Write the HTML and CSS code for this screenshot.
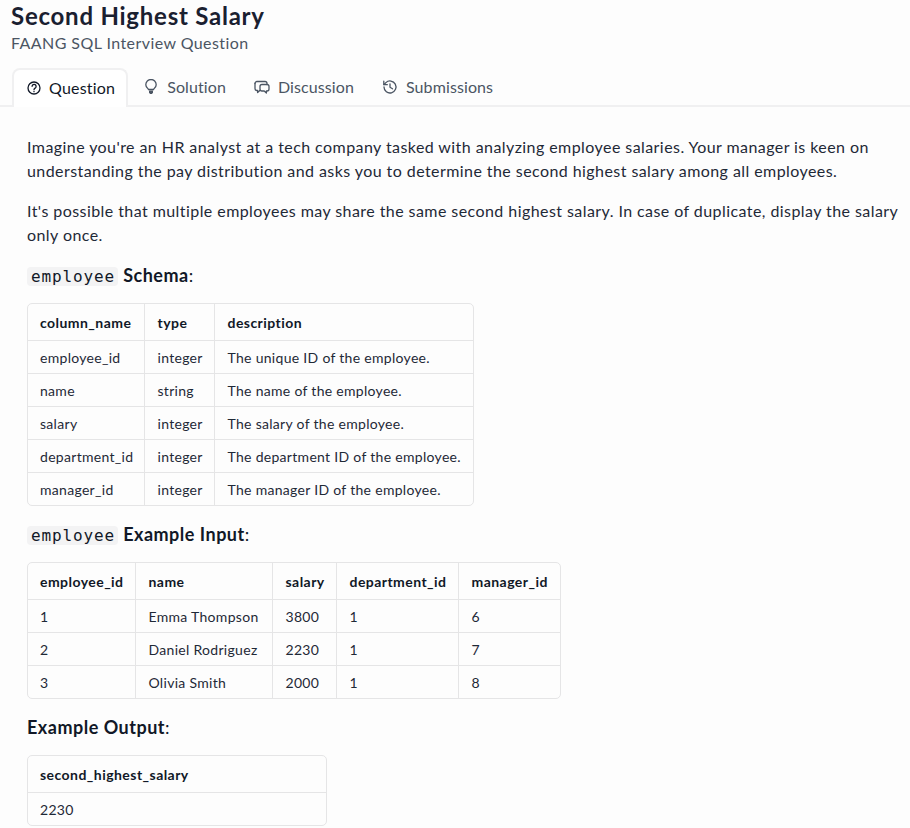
FILE: index.html
```html
<!DOCTYPE html>
<html lang="en">
<head>
<meta charset="utf-8">
<title>Second Highest Salary</title>
<link rel="stylesheet" href="styles.css">
</head>
<body>
<header class="head">
  <h1>Second Highest Salary</h1>
  <p class="sub">FAANG SQL Interview Question</p>
</header>
<nav class="tabs">
  <a class="tab active"><svg viewBox="0 0 16 16"><circle cx="8" cy="8" r="6"/><path d="M6.100 6.300a2 2 0 1 1 3 1.800c-.7.400-1.100.800-1.100 1.600"/><path d="M8 11.400v.3"/></svg>Question</a>
  <a class="tab"><svg viewBox="0 0 16 16"><path d="M5.500 10.500C5.300 9.500 2.800 8.500 2.800 5.700a5.200 5.200 0 0 1 10.400 0c0 2.800-2.500 3.800-2.700 4.800z"/><path class="solid" d="M6 11.500h4v2l-1 1.500H7l-1-1.500z"/></svg>Solution</a>
  <a class="tab"><svg viewBox="0 0 16 16"><path d="M1 4.500a2 2 0 0 1 2-2h8a2 2 0 0 1 2 2v1"/><path d="M1 4.500v5a2 2 0 0 0 2 2h.6v2l2.200-2"/><path d="M6 7.500a2 2 0 0 1 2-2h5a2 2 0 0 1 2 2V10a2 2 0 0 1-2 2h-.6v2l-2.200-2H8a2 2 0 0 1-2-2z"/></svg>Discussion</a>
  <a class="tab"><svg viewBox="0 0 16 16"><path d="M2 8a6 6 0 1 0 1.900-4.400L2 5.500"/><path d="M1.800 2.200v3.500h3.500"/><path d="M8 4.800v3.500l2.500 1.500"/></svg>Submissions</a>
</nav>
<main class="body">
  <p>Imagine you're an HR analyst at a tech company tasked with analyzing employee salaries. Your manager is keen on understanding the pay distribution and asks you to determine the second highest salary among all employees.</p>
  <p class="last">It's possible that multiple employees may share the same second highest salary. In case of duplicate, display the salary only once.</p>
  <h2><code>employee</code> <strong>Schema</strong>:</h2>
  <div class="card schema">
    <table>
      <thead><tr><th>column_name</th><th>type</th><th>description</th></tr></thead>
      <tbody>
        <tr><td>employee_id</td><td>integer</td><td>The unique ID of the employee.</td></tr>
        <tr><td>name</td><td>string</td><td>The name of the employee.</td></tr>
        <tr><td>salary</td><td>integer</td><td>The salary of the employee.</td></tr>
        <tr><td>department_id</td><td>integer</td><td>The department ID of the employee.</td></tr>
        <tr><td>manager_id</td><td>integer</td><td>The manager ID of the employee.</td></tr>
      </tbody>
    </table>
  </div>
  <h2><code>employee</code> <strong>Example Input</strong>:</h2>
  <div class="card sample">
    <table>
      <thead><tr><th>employee_id</th><th>name</th><th>salary</th><th>department_id</th><th>manager_id</th></tr></thead>
      <tbody>
        <tr><td>1</td><td>Emma Thompson</td><td>3800</td><td>1</td><td>6</td></tr>
        <tr><td>2</td><td>Daniel Rodriguez</td><td>2230</td><td>1</td><td>7</td></tr>
        <tr><td>3</td><td>Olivia Smith</td><td>2000</td><td>1</td><td>8</td></tr>
      </tbody>
    </table>
  </div>
  <h2><strong>Example Output</strong>:</h2>
  <div class="card result">
    <table>
      <thead><tr><th>second_highest_salary</th></tr></thead>
      <tbody><tr><td>2230</td></tr></tbody>
    </table>
  </div>
</main>
</body>
</html>
```
FILE: styles.css
```css
* { box-sizing: border-box; }
html, body { margin: 0; padding: 0; }
body {
  height: 828px;
  overflow: hidden;
  background: #fdfdfd;
  color: #111827;
  font-family: "Lato", "Noto Sans", sans-serif;
  font-size: 16px;
  letter-spacing: 0.43px;
}
.head { padding: 0 0 0 11px; }
h1 { margin: 0; font-size: 24px; line-height: 32px; font-weight: 700; color: #1a2030; letter-spacing: 0.76px; }
.sub { margin: -1px 0 0; font-size: 16px; line-height: 24px; color: #4b5563; }
.tabs {
  display: flex;
  margin-top: 13px;
  padding-left: 12px;
  height: 39px;
  border-bottom: 2px solid #f0f0f1;
  letter-spacing: 0.1px;
}
.tab {
  display: flex;
  align-items: center;
  gap: 8px;
  height: 37px;
  padding: 0 14px;
  color: #4b5563;
  white-space: nowrap;
}
.tab svg { width: 16px; height: 16px; fill: none; stroke: currentColor; stroke-width: 1.3; stroke-linecap: round; stroke-linejoin: round; }
.tab svg .solid { fill: currentColor; stroke: none; }
.tab.active {
  height: 39px;
  gap: 7px;
  padding: 0 11px 2px 12px;
  color: #111827;
  background: #fff;
  letter-spacing: 0.2px;
  border: 2px solid #f0f0f1;
  border-bottom: 0;
  border-radius: 8px 8px 0 0;
  margin-right: 1px;
}
.body { padding: 28px 10px 0 27px; }
.body p { margin: 0 0 16px; line-height: 24px; color: #1f2937; }
.body p.last { margin-bottom: 14px; }
h2 { margin: 0 0 14px; font-size: 18px; line-height: 28px; font-weight: 400; color: #111827; letter-spacing: 0.5px; }
h2 strong { font-weight: 700; }
code {
  font-family: "DejaVu Sans Mono", monospace;
  font-size: 16px;
  line-height: 1;
  font-weight: 400;
  letter-spacing: 0.87px;
  padding: 0 3px 0 4px;
  background: #f3f3f4;
  border-radius: 4px;
}
.card {
  display: block;
  margin-bottom: 14px;
  border: 1px solid #e5e5e6;
  border-radius: 5px;
  overflow: hidden;
}
.schema { width: 447px; }
.sample { width: 534px; }
.result { width: 300px; }
table { border-collapse: collapse; table-layout: fixed; font-size: 14px; width: 100%; letter-spacing: 0.3px; }
th, td { padding: 2px 12px 0 13px; text-align: left; white-space: nowrap; border-right: 1px solid #e5e5e6; border-bottom: 1px solid #e5e5e6; }
th:first-child, td:first-child { padding-left: 12px; }
th:last-child, td:last-child { border-right: 0; }
tbody tr:last-child td { border-bottom: 0; }
th { height: 36px; font-weight: 700; color: #111827; letter-spacing: 0.45px; }
td { height: 33px; color: #1f2937; }
.schema th:nth-child(1) { width: 116px; }
.schema th:nth-child(2) { width: 70px; }
.sample th:nth-child(1) { width: 107px; }
.sample th:nth-child(2) { width: 137px; }
.sample th:nth-child(3) { width: 64px; }
.sample th:nth-child(4) { width: 122px; }
```
